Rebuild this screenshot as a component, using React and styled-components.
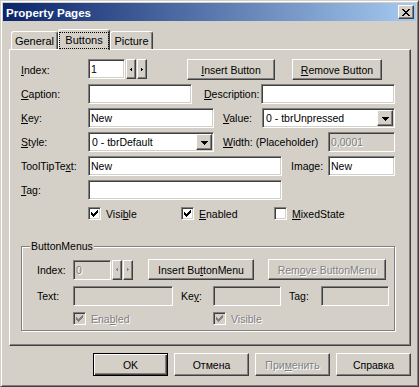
import React from "react";
import styled, { createGlobalStyle, css } from "styled-components";

const face = "#D4D0C8";

const GlobalStyle = createGlobalStyle`
  html, body { margin: 0; padding: 0; background: ${face}; }
  body {
    font-family: "Liberation Sans", Arial, sans-serif;
    font-size: 10.5px;
    color: #000;
  }
  * { box-sizing: border-box; }
`;

const raised = css`
  border: 1px solid;
  border-color: #fff #404040 #404040 #fff;
  box-shadow: inset -1px -1px #808080;
  background: ${face};
`;

const sunken = css`
  border: 1px solid;
  border-color: #808080 #fff #fff #808080;
  box-shadow: inset 1px 1px #404040, inset -1px -1px ${face};
`;

const disabledText = css`
  color: #808080;
  text-shadow: 1px 1px #fff;
`;

const Window = styled.div`
  width: 419px;
  height: 387px;
  background: ${face};
  border: 1px solid;
  border-color: ${face} #404040 #404040 ${face};
  box-shadow: inset 1px 1px #fff, inset -1px -1px #808080;
  padding: 2px;
  display: flex;
  flex-direction: column;
`;

const TitleBar = styled.div`
  height: 18px;
  display: flex;
  align-items: center;
  padding: 0 2px 0 2px;
  background: linear-gradient(to right, #0a246a, #a6caf0);
`;

const Title = styled.span`
  color: #fff;
  font-weight: bold;
  font-size: 11.6px;
  margin-left: 1px;
`;

const CloseBtn = styled.div`
  ${raised};
  margin-left: auto;
  width: 16px;
  height: 14px;
  display: flex;
  align-items: center;
  justify-content: center;
`;

const Body = styled.div`
  flex: 1;
  display: flex;
  flex-direction: column;
  padding: 8px 5px 0 6px;
`;

const TabStrip = styled.div`
  display: flex;
  align-items: flex-end;
  height: 20px;
  padding-left: 2px;
`;

const Tab = styled.div`
  position: relative;
  z-index: ${(p) => (p.$active ? 1 : 0)};
  width: ${(p) => p.$w}px;
  height: ${(p) => (p.$active ? 21 : 18)}px;
  margin-bottom: ${(p) => (p.$active ? -1 : 0)}px;
  background: ${face};
  border: 1px solid;
  border-color: #fff #404040 transparent #fff;
  border-bottom: none;
  border-radius: 3px 3px 0 0;
  box-shadow: inset -1px 0 #808080;
  display: flex;
  align-items: center;
  justify-content: center;
  font-size: 11px;
`;

const FocusBox = styled.span`
  border: 1px dotted #000;
  padding: 2px 5px;
  line-height: 11px;
`;

const Panel = styled.div`
  width: 402px;
  height: 297px;
  border: 1px solid;
  border-color: #fff #404040 #404040 #fff;
  box-shadow: inset -1px -1px #808080;
  padding: 9px 0 0 11px;
  display: flex;
  flex-direction: column;
  gap: 4px;
`;

const Row = styled.div`
  display: flex;
  align-items: ${(p) => p.$align || "center"};
  height: ${(p) => p.$h || 20}px;
  margin-top: ${(p) => p.$mt || 0}px;
  padding-left: ${(p) => p.$pl || 0}px;
`;

const Label = styled.span`
  width: ${(p) => p.$w}px;
  margin-left: ${(p) => p.$ml || 0}px;
  flex-shrink: 0;
  white-space: nowrap;
  ${(p) => p.$disabled && disabledText};
`;

const Field = styled.div`
  ${sunken};
  width: ${(p) => p.$w}px;
  height: 20px;
  flex-shrink: 0;
  display: flex;
  align-items: center;
  padding: 0 2px;
  background: ${(p) => (p.$disabled ? face : "#fff")};
  ${(p) => p.$disabled && disabledText};
  white-space: nowrap;
  overflow: hidden;
`;

const ComboText = styled.span`
  flex: 1;
  padding-left: 1px;
`;

const DropBtn = styled.div`
  ${raised};
  width: 16px;
  height: 16px;
  display: flex;
  align-items: center;
  justify-content: center;
  padding-top: 1px;
`;

const SpinPair = styled.div`
  display: flex;
  gap: 1px;
  margin-left: 1px;
`;

const SpinBtn = styled.div`
  ${raised};
  width: 10px;
  height: 20px;
  display: flex;
  align-items: center;
  justify-content: center;
`;

const PushButton = styled.button`
  ${raised};
  font: inherit;
  color: #000;
  padding: 0;
  width: ${(p) => p.$w}px;
  height: ${(p) => p.$h || 21}px;
  margin-left: ${(p) => p.$ml || 0}px;
  flex-shrink: 0;
  ${(p) => p.$disabled && disabledText};
  ${(p) =>
    p.$default &&
    css`
      border-color: #000;
      box-shadow: inset 1px 1px #fff, inset -1px -1px #404040,
        inset -2px -2px #808080;
    `};
`;

const CheckItem = styled.label`
  display: flex;
  align-items: center;
  width: ${(p) => (p.$w ? `${p.$w}px` : "auto")};
  gap: 5px;
  ${(p) => p.$disabled && disabledText};
`;

const Box = styled.span`
  ${sunken};
  width: 13px;
  height: 13px;
  flex-shrink: 0;
  background: ${(p) => (p.$disabled ? face : "#fff")};
  display: flex;
  align-items: center;
  justify-content: center;
`;

const Group = styled.div`
  width: 374px;
  height: 85px;
  margin-top: 22px;
  border: 1px solid #808080;
  box-shadow: inset 1px 1px #fff, 1px 1px #fff;
  padding: 0 0 0 15px;
  display: flex;
  flex-direction: column;
  gap: 6px;
`;

const GroupCaption = styled.span`
  align-self: flex-start;
  margin: -7px 0 -6px -7px;
  padding: 0 1px;
  line-height: 13px;
  background: ${face};
`;

const Footer = styled.div`
  display: flex;
  justify-content: flex-end;
  gap: 6px;
  margin-top: 7px;
`;

const CloseGlyph = () => (
  <svg width="8" height="7" viewBox="0 0 8 7" shapeRendering="crispEdges">
    <path
      d="M0 0h2v1H0z M6 0h2v1H6z M1 1h2v1H1z M5 1h2v1H5z M2 2h4v1H2z M3 3h2v1H3z M2 4h4v1H2z M1 5h2v1H1z M5 5h2v1H5z M0 6h2v1H0z M6 6h2v1H6z"
      fill="#000"
    />
  </svg>
);

const DownArrow = () => (
  <svg width="7" height="4" viewBox="0 0 7 4" shapeRendering="crispEdges">
    <path d="M0 0h7v1H0z M1 1h5v1H1z M2 2h3v1H2z M3 3h1v1H3z" fill="#000" />
  </svg>
);

const SmallArrow = ({ dir, color }) => (
  <svg width="2" height="3" viewBox="0 0 2 3" shapeRendering="crispEdges">
    <path
      d={dir === "left" ? "M0 1h1v1H0z M1 0h1v3H1z" : "M0 0h1v3H0z M1 1h1v1H1z"}
      fill={color}
    />
  </svg>
);

const CheckMark = ({ color }) => (
  <svg width="7" height="7" viewBox="0 0 7 7" shapeRendering="crispEdges">
    <path
      d="M0 2h1v3H0z M1 3h1v3H1z M2 4h1v3H2z M3 3h1v3H3z M4 2h1v3H4z M5 1h1v3H5z M6 0h1v3H6z"
      fill={color}
    />
  </svg>
);

function Spin({ disabled }) {
  const c = disabled ? "#808080" : "#000";
  return (
    <SpinPair>
      <SpinBtn>
        <SmallArrow dir="left" color={c} />
      </SpinBtn>
      <SpinBtn>
        <SmallArrow dir="right" color={c} />
      </SpinBtn>
    </SpinPair>
  );
}

function Combo({ w, value }) {
  return (
    <Field $w={w} style={{ paddingRight: 1 }}>
      <ComboText>{value}</ComboText>
      <DropBtn>
        <DownArrow />
      </DropBtn>
    </Field>
  );
}

function Check({ label, checked, disabled, w }) {
  return (
    <CheckItem $w={w} $disabled={disabled}>
      <Box $disabled={disabled}>
        {checked && <CheckMark color={disabled ? "#808080" : "#000"} />}
      </Box>
      <span>{label}</span>
    </CheckItem>
  );
}

export default function App() {
  return (
    <>
      <GlobalStyle />
      <Window>
        <TitleBar>
          <Title>Property Pages</Title>
          <CloseBtn>
            <CloseGlyph />
          </CloseBtn>
        </TitleBar>
        <Body>
          <TabStrip>
            <Tab $w={47}>General</Tab>
            <Tab $w={52} $active>
              <FocusBox>Buttons</FocusBox>
            </Tab>
            <Tab $w={43}>Picture</Tab>
          </TabStrip>
          <Panel>
            <Row $h={21} $align="flex-start">
              <Label $w={67} style={{ alignSelf: "center" }}>
                <u>I</u>ndex:
              </Label>
              <Field $w={37}>1</Field>
              <Spin />
              <PushButton $w={88} $ml={40}>
                <u>I</u>nsert Button
              </PushButton>
              <PushButton $w={90} $ml={17}>
                <u>R</u>emove Button
              </PushButton>
            </Row>
            <Row>
              <Label $w={67}>
                <u>C</u>aption:
              </Label>
              <Field $w={104} />
              <Label $w={57} $ml={12}>
                <u>D</u>escription:
              </Label>
              <Field $w={134} />
            </Row>
            <Row>
              <Label $w={67}>
                <u>K</u>ey:
              </Label>
              <Field $w={126}>New</Field>
              <Label $w={39} $ml={9}>
                <u>V</u>alue:
              </Label>
              <Combo w={133} value="0 - tbrUnpressed" />
            </Row>
            <Row>
              <Label $w={67}>
                <u>S</u>tyle:
              </Label>
              <Combo w={126} value="0 - tbrDefault" />
              <Label $w={105} $ml={9}>
                <u>W</u>idth: (Placeholder)
              </Label>
              <Field $w={67} $disabled>
                0,0001
              </Field>
            </Row>
            <Row>
              <Label $w={67}>
                ToolTipTe<u>x</u>t:
              </Label>
              <Field $w={194}>New</Field>
              <Label $w={37} $ml={9}>
                Image:
              </Label>
              <Field $w={67}>New</Field>
            </Row>
            <Row>
              <Label $w={67}>
                <u>T</u>ag:
              </Label>
              <Field $w={194} />
            </Row>
            <Row $h={13} $mt={3} $pl={67}>
              <Check
                w={93}
                checked
                label={
                  <>
                    Visi<u>b</u>le
                  </>
                }
              />
              <Check
                w={93}
                checked
                label={
                  <>
                    <u>E</u>nabled
                  </>
                }
              />
              <Check
                label={
                  <>
                    <u>M</u>ixedState
                  </>
                }
              />
            </Row>
            <Group>
              <GroupCaption>ButtonMenus</GroupCaption>
              <Row $h={21} style={{ marginTop: 6 }}>
                <Label $w={36}>Index:</Label>
                <Field $w={38} $disabled>
                  0
                </Field>
                <Spin disabled />
                <PushButton $w={106} $ml={15}>
                  Insert Bu<u>t</u>tonMenu
                </PushButton>
                <PushButton $w={118} $ml={14} $disabled>
                  Rem<u>o</u>ve ButtonMenu
                </PushButton>
              </Row>
              <Row>
                <Label $w={36}>Text:</Label>
                <Field $w={100} $disabled />
                <Label $w={32} $ml={8}>
                  Ke<u>y</u>:
                </Label>
                <Field $w={68} $disabled />
                <Label $w={32} $ml={8}>
                  Tag:
                </Label>
                <Field $w={68} $disabled />
              </Row>
              <Row $h={13} $pl={36}>
                <Check
                  w={140}
                  checked
                  disabled
                  label={
                    <>
                      Ena<u>b</u>led
                    </>
                  }
                />
                <Check checked disabled label="Visible" />
              </Row>
            </Group>
          </Panel>
          <Footer>
            <PushButton $w={75} $h={23} $default>
              OK
            </PushButton>
            <PushButton $w={75} $h={23}>
              Отмена
            </PushButton>
            <PushButton $w={75} $h={23} $disabled>
              При<u>м</u>енить
            </PushButton>
            <PushButton $w={75} $h={23}>
              Справка
            </PushButton>
          </Footer>
        </Body>
      </Window>
    </>
  );
}
